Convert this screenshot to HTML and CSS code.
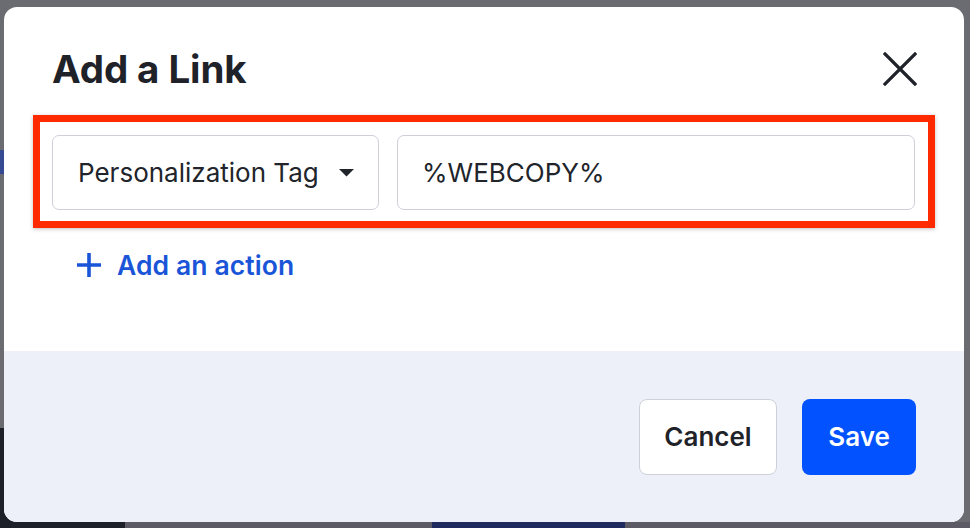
FILE: index.html
```html
<!DOCTYPE html>
<html lang="en">
<head>
<meta charset="utf-8">
<title>Add a Link</title>
<link rel="stylesheet" href="styles.css">
</head>
<body>
<div class="screen">
  <div class="modal" role="dialog" aria-labelledby="dlg-title">
    <div class="modal-body">
      <div class="modal-header">
        <h1 id="dlg-title" class="modal-title">Add a Link</h1>
        <button class="close-btn" aria-label="Close">
          <svg width="34" height="34" viewBox="0 0 34 34"><path d="M2 2 L32 32 M32 2 L2 32" stroke="#1f2329" stroke-width="3.2" stroke-linecap="square"/></svg>
        </button>
      </div>
      <div class="highlight">
        <div class="field-row">
          <div class="select">
            <span class="select-label">Personalization Tag</span>
            <svg class="caret" width="15" height="8" viewBox="0 0 15 8"><path d="M0 0 H15 L7.5 7.5 Z" fill="#21252b"/></svg>
          </div>
          <div class="input">%WEBCOPY%</div>
        </div>
      </div>
      <div class="add-action">
        <svg class="plus" width="24" height="24" viewBox="0 0 24 24"><path d="M12 0 V24 M0 12 H24" stroke="#1a55d8" stroke-width="3.6"/></svg>
        <span>Add an action</span>
      </div>
    </div>
    <div class="modal-footer">
      <button class="btn btn-secondary">Cancel</button>
      <button class="btn btn-primary">Save</button>
    </div>
  </div>
</div>
</body>
</html>
```
FILE: styles.css
```css
* { box-sizing: border-box; }
html, body { margin: 0; padding: 0; }
body {
  font-family: "Inter", "Noto Sans", sans-serif;
  color: #1f2329;
}
.screen {
  width: 970px;
  height: 528px;
  padding: 7px 6px 6px 4px;
  background:
    linear-gradient(#354a92, #354a92) 0 150px / 4px 24px no-repeat,
    linear-gradient(#1e2029, #1e2029) 0 428px / 125px 100px no-repeat,
    linear-gradient(#1f2a5e, #1f2a5e) 432px 522px / 193px 6px no-repeat,
    linear-gradient(#5c5b65, #5c5b65) 0 522px / 970px 6px no-repeat,
    #6b6b72;
  overflow: hidden;
}
.modal {
  width: 960px;
  height: 515px;
  background: #ffffff;
  border-radius: 13px;
  overflow: hidden;
  display: flex;
  flex-direction: column;
}
.modal-body {
  height: 344px;
  padding: 0 49px 0 48px;
}
.modal-header {
  height: 92px;
  padding-top: 32px;
  display: flex;
  align-items: center;
  justify-content: space-between;
}
.modal-title {
  margin: 0;
  font-size: 38.5px;
  font-weight: 700;
  letter-spacing: -0.1px;
  line-height: 60px;
  color: #1f2329;
}
.close-btn {
  border: 0;
  background: none;
  padding: 0;
  margin-right: -2px;
  width: 34px;
  height: 34px;
  display: flex;
}
.highlight {
  margin: 16px -20px 0 -19px;
  border: 7px solid #ff2a00;
  padding: 13px 13px 11px 12px;
  box-shadow: 0 1px 4px rgba(0, 0, 0, 0.25);
}
.field-row {
  display: flex;
  gap: 18px;
}
.select, .input {
  height: 75px;
  border: 1.5px solid #cdd0d9;
  border-radius: 7px;
  display: flex;
  align-items: center;
  font-size: 26px;
  color: #21252b;
  background: #fff;
}
.select {
  width: 327px;
  padding: 0 24px 0 25px;
  justify-content: space-between;
}
.input {
  flex: 1;
  padding-left: 24px;
}
.caret { margin-top: 1px; }
.add-action {
  margin-top: 17px;
  height: 40px;
  padding-left: 25px;
  display: flex;
  align-items: center;
  gap: 16px;
  color: #1a55d8;
  font-size: 26.5px;
  font-weight: 600;
  letter-spacing: 0.1px;
}
.modal-footer {
  flex: 1;
  background: #edf0f8;
  display: flex;
  justify-content: flex-end;
  align-items: center;
  gap: 25px;
  padding-right: 48px;
}
.btn {
  font-family: "Inter", "Noto Sans", sans-serif;
  font-size: 26px;
  font-weight: 600;
  border-radius: 8px;
  height: 76px;
  padding: 0;
}
.btn-secondary {
  width: 138px;
  background: #ffffff;
  border: 1.5px solid #cdd0d9;
  color: #1f2329;
}
.btn-primary {
  width: 114px;
  background: #0252ff;
  border: 0;
  color: #ffffff;
}
```
